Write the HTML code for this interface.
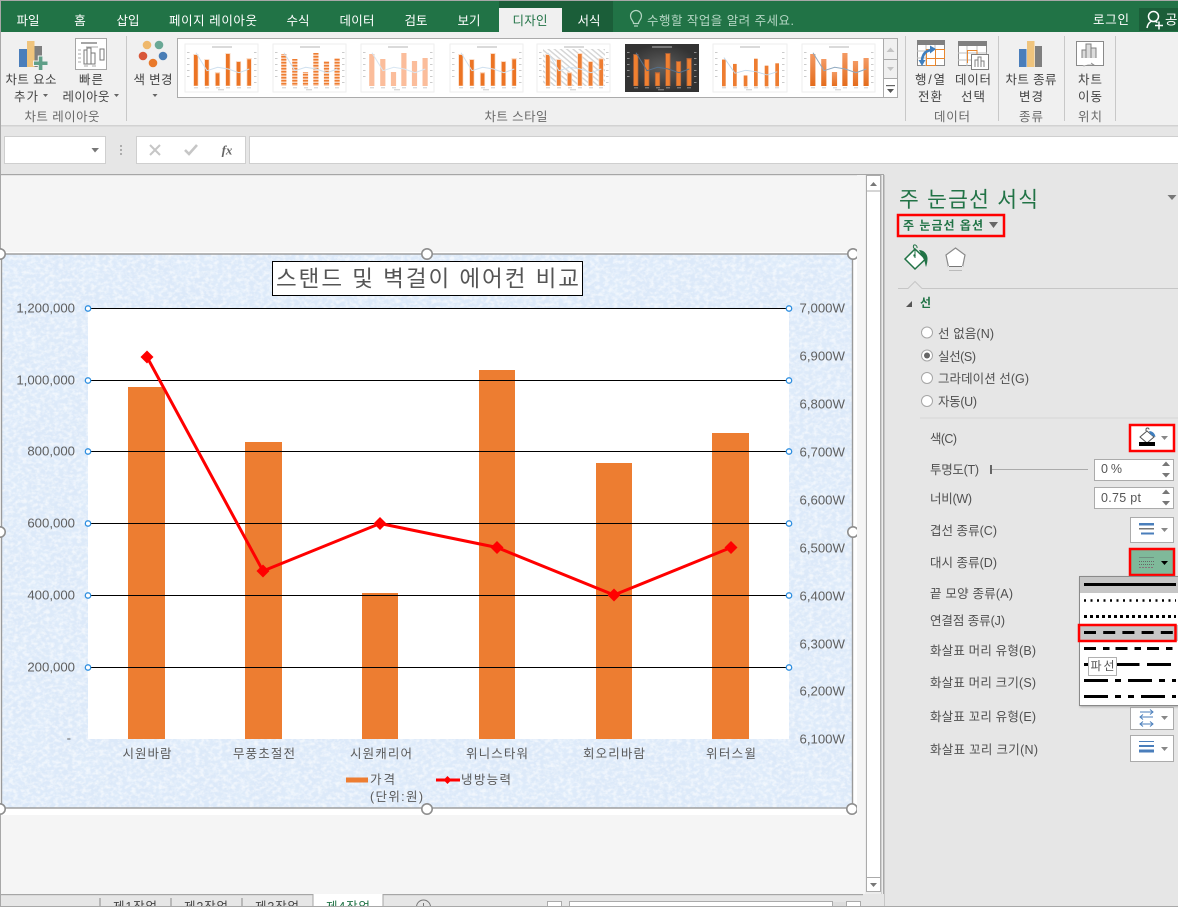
<!DOCTYPE html>
<html lang="ko"><head><meta charset="utf-8"><title>Excel</title>
<style>
html,body{margin:0;padding:0;width:1178px;height:907px;overflow:hidden;background:#e6e6e6}
svg{display:block}
text{font-family:"Liberation Sans","Noto Sans CJK KR",sans-serif;dominant-baseline:central;fill:#444;font-size:12.5px;transform:translateY(2px)}
.c{text-anchor:middle}
.e{text-anchor:end}
.tab{fill:#fff;font-size:12.5px;text-anchor:middle}
.r{fill:#505050;font-size:12.5px}
.lab{fill:#6a6a6a;font-size:12.5px;text-anchor:middle}
.ax{fill:#5f5f5f;font-size:13.2px;transform:translateY(1px)}
.cat{fill:#5a5a5a;font-size:12.5px;text-anchor:middle}
</style></head><body>
<svg xmlns="http://www.w3.org/2000/svg" width="1178" height="907" viewBox="0 0 1178 907">
<defs>
<filter id="tex" x="0" y="0" width="100%" height="100%">
<feTurbulence type="fractalNoise" baseFrequency="0.04" numOctaves="3" seed="4"/>
<feColorMatrix type="matrix" values="0 0 0 0 0.74  0 0 0 0 0.84  0 0 0 0 0.96  2 0 0 0 -0.75"/>
</filter>
<filter id="tex2" x="0" y="0" width="100%" height="100%">
<feTurbulence type="fractalNoise" baseFrequency="0.22 0.28" numOctaves="3" seed="11"/>
<feColorMatrix type="matrix" values="0 0 0 0 1  0 0 0 0 1  0 0 0 0 1  0 2.6 0 0 -1.02"/>
</filter>
<pattern id="stripe" width="3" height="3" patternUnits="userSpaceOnUse"><rect width="3" height="3" fill="#fbd3b9"/><rect width="3" height="1.5" fill="#ee7d31"/></pattern>
<pattern id="hatch" width="4" height="4" patternUnits="userSpaceOnUse" patternTransform="rotate(40)"><rect width="4" height="4" fill="#fff"/><rect width="4" height="1.4" fill="#d4d4d4"/></pattern>
<linearGradient id="gr" x1="0" y1="0" x2="0" y2="1"><stop offset="0" stop-color="#f49a63"/><stop offset="1" stop-color="#e46c1c"/></linearGradient>
<radialGradient id="dk"><stop offset="0" stop-color="#5f5f5f"/><stop offset="1" stop-color="#333"/></radialGradient>
<g id="b"><rect x="9" y="11" width="3.7" height="30.7"/><rect x="20" y="16" width="3.7" height="25.7"/><rect x="30.7" y="29.3" width="3.7" height="12.4"/><rect x="41" y="10" width="3.7" height="31.7"/><rect x="51.7" y="18" width="3.7" height="23.7"/><rect x="62.3" y="15.3" width="3.7" height="26.4"/></g>
<g id="h"><rect x="8.2" y="10" width="5.2" height="32" /><rect x="19.2" y="15" width="5.2" height="27"/><rect x="29.9" y="28" width="5.2" height="14"/><rect x="40.3" y="9" width="5.2" height="33"/><rect x="50.9" y="17" width="5.2" height="25"/><rect x="61.5" y="14" width="5.2" height="28"/></g>
<polyline id="l" fill="none" stroke-width="1" points="11,8.7 22,26.7 32.7,23.3 43.3,25 54,28.7 64.3,25"/>
<g id="tk" fill="#b5b5b5"><rect x="27" y="2.5" width="20" height="1"/><rect x="2" y="8" width="2.5" height=".7"/><rect x="2" y="14" width="2.5" height=".7"/><rect x="2" y="20" width="2.5" height=".7"/><rect x="2" y="26" width="2.5" height=".7"/><rect x="2" y="32" width="2.5" height=".7"/><rect x="69" y="8" width="2.5" height=".7"/><rect x="69" y="14" width="2.5" height=".7"/><rect x="69" y="20" width="2.5" height=".7"/><rect x="69" y="26" width="2.5" height=".7"/><rect x="69" y="32" width="2.5" height=".7"/><rect x="69" y="38" width="2.5" height=".7"/><rect x="9" y="43.5" width="4" height=".7"/><rect x="20" y="43.5" width="4" height=".7"/><rect x="31" y="43.5" width="4" height=".7"/><rect x="41" y="43.5" width="4" height=".7"/><rect x="52" y="43.5" width="4" height=".7"/><rect x="62" y="43.5" width="4" height=".7"/><rect x="33" y="45.5" width="6" height=".7"/></g>
<g id="handle"><circle r="5.2" fill="#fff" stroke="#8e8e8e" stroke-width="1.6"/></g>
</defs>

<!-- base -->
<rect width="1178" height="907" fill="#e6e6e6"/>
<rect y="0" width="1178" height="32" fill="#217346"/>
<rect y="0" width="1178" height="1" fill="#a8a8a8"/>
<rect x="499" y="1" width="114" height="31" fill="#1b5e39"/>
<rect x="499" y="8" width="63" height="24" fill="#f0f0f0"/>
<rect x="1139" y="8" width="39" height="23" fill="#1b5e39"/>
<rect x="0" y="32" width="1178" height="93" fill="#f0f0f0"/>
<rect x="0" y="125" width="1178" height="1.5" fill="#d2d2d2"/>
<rect x="0" y="0" width="1" height="907" fill="#a8a8a8"/>

<!-- tabs -->
<text class="tab" x="28" y="19">파일</text>
<text class="tab" x="80" y="19">홈</text>
<text class="tab" x="128" y="19">삽입</text>
<text class="tab" x="213" y="19" textLength="88">페이지 레이아웃</text>
<text class="tab" x="298" y="19">수식</text>
<text class="tab" x="357" y="19" textLength="35">데이터</text>
<text class="tab" x="416" y="19">검토</text>
<text class="tab" x="469" y="19">보기</text>
<text class="tab" x="530" y="19" style="fill:#217346" textLength="35">디자인</text>
<text class="tab" x="589" y="19">서식</text>
<g fill="none" stroke="#b5d6c4" stroke-width="1.2"><path d="M633.500 23.500c0-3-3-3.500-3-7.500a5.500 5.500 0 0 1 11 0c0 4-3 4.500-3 7.500z"/><path d="M634 26h4"/></g>
<text x="647" y="19" style="fill:#b5d6c4" textLength="147">수행할 작업을 알려 주세요.</text>
<text class="tab" x="1111" y="18" textLength="36">로그인</text>
<g fill="none" stroke="#fff" stroke-width="1.5"><circle cx="1153.500" cy="16.500" r="5"/><path d="M1147 28c1-5 3-6 5-7M1155.500 21.500l2 1"/><path d="M1155 25.500h8M1159 21.500v8"/></g>
<text class="tab" x="1165" y="18" style="text-anchor:start;font-size:13.500px">공유</text>

<!-- ribbon separators -->
<g fill="#c8c8c8"><rect x="126" y="36" width="1" height="85"/><rect x="905" y="36" width="1" height="85"/><rect x="998" y="36" width="1" height="85"/><rect x="1064" y="36" width="1" height="85"/><rect x="1115" y="36" width="1" height="85"/></g>

<!-- chart elements icon -->
<rect x="19" y="49" width="8" height="18" fill="#4a7ebb"/><rect x="27" y="41" width="7.500" height="26" fill="#efc47d"/><rect x="34.500" y="46" width="7.500" height="21" fill="#7f7f7f"/>
<path d="M38.300 56h4.600v5h5.100v4.500h-5.100v5h-4.600v-5h-4.800v-4.500h4.800z" fill="#5f9f88" stroke="#f0f0f0" stroke-width="1"/>
<text class="c" x="31" y="78" textLength="51">차트 요소</text>
<text class="c" x="26" y="95" textLength="24">추가</text><polygon points="43,94 48,94 45.500,97" fill="#666"/>
<!-- quick layout -->
<rect x="75.500" y="38.500" width="31" height="31" fill="#fff" stroke="#a6a6a6"/>
<rect x="81" y="42" width="16" height="2" fill="#a6a6a6"/><rect x="84" y="50" width="3" height="14" fill="none" stroke="#777"/><rect x="87" y="48" width="4" height="16" fill="none" stroke="#777"/><rect x="91" y="53" width="4" height="11" fill="none" stroke="#777"/>
<rect x="100" y="49" width="4" height="11" fill="none" stroke="#777"/>
<path d="M78 50h3M78 54h3M78 58h3M78 62h3M84 66h4M92 66h4M86 47h12" stroke="#aaa" stroke-width="1"/>
<text class="c" x="91" y="78" textLength="24">빠른</text>
<text class="c" x="86" y="95" textLength="47">레이아웃</text><polygon points="114,94 119,94 116.500,97" fill="#666"/>
<!-- color -->
<circle cx="147" cy="45" r="4.300" fill="#efb86b"/><circle cx="159" cy="45" r="4.300" fill="#69a895"/><circle cx="143" cy="56" r="4.300" fill="#d8573a"/><circle cx="163" cy="56" r="4.300" fill="#4a7eb6"/><circle cx="153" cy="63" r="4.300" fill="#e9792a"/>
<text class="c" x="153" y="78" textLength="39">색 변경</text><polygon points="152.500,94 157.500,94 155,97" fill="#666"/>
<text class="lab" x="62" y="115" textLength="75">차트 레이아웃</text>
<text class="lab" x="516" y="115" textLength="63">차트 스타일</text>

<!-- gallery -->
<rect x="177.500" y="38.500" width="706" height="59" fill="#fff" stroke="#ababab"/>
<g fill="#f0f0f0" stroke="#ababab"><rect x="883.500" y="38.500" width="14" height="21"/><rect x="883.500" y="59.500" width="14" height="19"/></g><rect x="883.500" y="78.500" width="14" height="19" fill="#fff" stroke="#ababab"/>
<polygon points="886.500,52 894.500,52 890.500,47.500" fill="#c4c4c4"/><polygon points="887,67 894,67 890.500,71" fill="#c4c4c4"/><rect x="886" y="85" width="9" height="1.200" fill="#666"/><polygon points="887,89 894,89 890.500,93" fill="#555"/>

<g transform="translate(185,44)"><rect width="73" height="48" fill="#fff" stroke="#eee"/><use href="#tk"/><use href="#h" fill="#fbdcc7"/><use href="#b" fill="#ec7424"/><use href="#l" stroke="#cfe0ef"/></g>
<g transform="translate(273,44)"><rect width="73" height="48" fill="#fff" stroke="#eee"/><use href="#tk"/><use href="#h" fill="url(#stripe)"/><use href="#l" stroke="#cfe0ef"/></g>
<g transform="translate(361,44)"><rect width="73" height="48" fill="#fff" stroke="#eee"/><use href="#tk"/><use href="#h" fill="#fbbd9b"/><use href="#l" stroke="#d8e6f2"/></g>
<g transform="translate(450,44)"><rect width="73" height="48" fill="#fff" stroke="#eee"/><use href="#tk"/><use href="#h" fill="#fbdcc7"/><use href="#b" fill="#ec7424"/><use href="#l" stroke="#cfe0ef"/></g>
<g transform="translate(537,44)"><rect width="73" height="48" fill="#fff" stroke="#eee"/><rect x="6" y="5" width="62" height="37" fill="url(#hatch)"/><use href="#tk"/><use href="#h" fill="#fbdcc7"/><use href="#b" fill="#ee7d31"/><use href="#l" stroke="#cfe0ef"/></g>
<g transform="translate(625,44)"><rect width="74" height="48" fill="url(#dk)"/><use href="#tk"/><use href="#h" fill="#a9603a"/><use href="#b" fill="#f08030"/><use href="#l" stroke="#54708c"/></g>
<g transform="translate(713,44)"><rect width="74" height="48" fill="#fff" stroke="#eee"/><use href="#tk"/><g transform="translate(0,6) scale(1,.87)"><use href="#b" fill="#ee7d31"/><use href="#l" stroke="#c0d6e8"/></g></g>
<g transform="translate(802,44)"><rect width="73" height="48" fill="#fff" stroke="#eee"/><use href="#tk"/><use href="#h" fill="url(#gr)"/><use href="#l" stroke="#8fa9c0"/></g>

<!-- switch row/col -->
<rect x="917.500" y="40.500" width="27" height="25" fill="#fff" stroke="#8a8a8a"/><rect x="917" y="40" width="28" height="5" fill="#808080"/>
<path d="M917 51h28M917 58h28M926 45v21M935 45v21" stroke="#bdbdbd"/>
<rect x="926.500" y="49.500" width="9" height="9" fill="#fff" stroke="#e8872f"/><rect x="935.500" y="49.500" width="9" height="9" fill="#fff" stroke="#e8872f"/><rect x="926.500" y="58.500" width="9" height="7" fill="#fff" stroke="#e8872f"/>
<path d="M922 62c0-7 3-11 9-12" fill="none" stroke="#3f7fbf" stroke-width="2.600"/><polygon points="930,45.500 936,49 930,53.500" fill="#3f7fbf"/><polygon points="918.500,60 925.500,60 922,66" fill="#3f7fbf"/>
<text class="c" x="930" y="78" textLength="30">행/열</text><text class="c" x="930" y="95" textLength="24">전환</text>
<!-- select data -->
<rect x="958.500" y="41.500" width="28" height="24" fill="#fff" stroke="#8a8a8a"/><rect x="958" y="41" width="29" height="5" fill="#808080"/>
<path d="M958 53h29M958 60h29M967 46v20M977 46v20" stroke="#bdbdbd"/>
<path d="M967.500 63V50.500h9.500V56" fill="none" stroke="#e8872f" stroke-width="1"/>
<rect x="971.500" y="54.500" width="17" height="15" fill="#fff" stroke="#808080"/><path d="M975 67v-7h3v7M978 67v-10h3v10M981 67v-6h3v6" fill="none" stroke="#808080"/>
<text class="c" x="973" y="78" textLength="36">데이터</text><text class="c" x="973" y="95" textLength="24">선택</text>
<!-- change type -->
<rect x="1019" y="49" width="7.500" height="18" fill="#4a7ebb"/><rect x="1027" y="41" width="7.500" height="26" fill="#efc47d"/><rect x="1035" y="46" width="7" height="21" fill="#7f7f7f"/>
<text class="c" x="1031" y="78" textLength="51">차트 종류</text><text class="c" x="1031" y="95" textLength="24">변경</text>
<!-- move -->
<path d="M1076.500 41.500h27v24h-15l-3 0 -3 0c-1 0-6 0-6 0z" fill="#fff" stroke="#8a8a8a"/><path d="M1082 65.500c1 0 2 .5 2 .5l4-1h6l-3-2" fill="#fff" stroke="#8a8a8a" stroke-width=".8"/>
<path d="M1082 58v-8h4v8M1086 58v-14h5v14M1091 58v-10h5v10" fill="#dcdcdc" stroke="#808080"/>
<text class="c" x="1090" y="78" textLength="24">차트</text><text class="c" x="1090" y="95" textLength="24">이동</text>
<text class="lab" x="952" y="115" textLength="36">데이터</text><text class="lab" x="1031" y="115" textLength="24">종류</text><text class="lab" x="1090" y="115" textLength="24">위치</text>

<!-- formula bar -->
<rect x="4.500" y="136.500" width="101" height="27" fill="#fff" stroke="#cfcfcf"/><polygon points="91.500,148 99,148 95,152.500" fill="#777"/>
<g fill="#adadad"><rect x="120" y="145" width="2" height="2"/><rect x="120" y="149" width="2" height="2"/><rect x="120" y="153" width="2" height="2"/></g>
<rect x="136.500" y="136.500" width="109" height="27" fill="#fff" stroke="#cfcfcf"/>
<path d="M150 145l10 10M160 145l-10 10" stroke="#c6c6c6" stroke-width="2" fill="none"/>
<path d="M185 150l4 4 8-9" stroke="#c6c6c6" stroke-width="2.600" fill="none"/>
<text x="227" y="148" class="c" style="font-family:'Liberation Serif',serif;font-style:italic;font-weight:bold;font-size:13px;fill:#666">fx</text>
<rect x="249.500" y="136.500" width="930" height="27" fill="#fff" stroke="#cfcfcf"/>

<!-- sheet area -->
<rect x="1" y="175" width="883" height="719" fill="#f5f5f5"/>
<rect x="0" y="174" width="884" height="1.200" fill="#a6a6a6"/>
<rect x="0" y="252" width="857" height="563" fill="#fff"/>

<!-- chart -->
<rect x="2" y="254" width="851" height="554" fill="#dce9f9"/>
<rect x="2" y="254" width="851" height="554" filter="url(#tex)"/>
<rect x="2" y="254" width="851" height="554" filter="url(#tex2)" opacity=".6"/>
<rect x="88" y="308" width="701" height="431" fill="#fff"/>
<rect x="1.500" y="254" width="851" height="554" fill="none" stroke="#9a9a9a" stroke-width="1.400"/>

<g fill="#ed7d31"><rect x="128" y="387" width="37" height="352"/><rect x="245" y="442" width="37" height="297"/><rect x="362" y="593" width="36" height="146"/><rect x="479" y="370" width="36" height="369"/><rect x="596" y="463" width="36" height="276"/><rect x="712" y="433" width="37" height="306"/></g>
<g stroke="#000" stroke-width="1"><path d="M88 308.500H789M88 380.500H789M88 451.500H789M88 523.500H789M88 595.500H789M88 667.500H789"/></g>
<polyline points="147,357 263,571 380,523.500 497,547.500 614,595 731,547.500" fill="none" stroke="#f00" stroke-width="3"/>
<g fill="#f00"><polygon points="147,350.500 153.500,357 147,363.500 140.500,357"/><polygon points="263,564.500 269.500,571 263,577.500 256.500,571"/><polygon points="380,517 386.500,523.500 380,530 373.500,523.500"/><polygon points="497,541 503.500,547.500 497,554 490.500,547.500"/><polygon points="614,588.500 620.500,595 614,601.500 607.500,595"/><polygon points="731,541 737.500,547.500 731,554 724.500,547.500"/></g>
<g fill="#fff" stroke="#2f8fe0" stroke-width="1.300"><circle cx="88" cy="308.500" r="2.700"/><circle cx="88" cy="380.500" r="2.700"/><circle cx="88" cy="451.500" r="2.700"/><circle cx="88" cy="523.500" r="2.700"/><circle cx="88" cy="595.500" r="2.700"/><circle cx="88" cy="667.500" r="2.700"/><circle cx="789" cy="308.500" r="2.700"/><circle cx="789" cy="380.500" r="2.700"/><circle cx="789" cy="451.500" r="2.700"/><circle cx="789" cy="523.500" r="2.700"/><circle cx="789" cy="595.500" r="2.700"/><circle cx="789" cy="667.500" r="2.700"/></g>

<rect x="272.500" y="261.500" width="310" height="34" fill="#fff" stroke="#000"/>
<text class="c" x="427.500" y="277" style="font-size:22.500px;fill:#555" textLength="303">스탠드 및 벽걸이 에어컨 비교</text>

<text class="ax e" x="75" y="307">1,200,000</text><text class="ax e" x="75" y="379">1,000,000</text><text class="ax e" x="75" y="450">800,000</text><text class="ax e" x="75" y="522">600,000</text><text class="ax e" x="75" y="594">400,000</text><text class="ax e" x="75" y="666">200,000</text><text class="ax e" x="71" y="737">-</text>
<text class="ax" x="799.500" y="307">7,000W</text><text class="ax" x="799.500" y="355">6,900W</text><text class="ax" x="799.500" y="403">6,800W</text><text class="ax" x="799.500" y="451">6,700W</text><text class="ax" x="799.500" y="499">6,600W</text><text class="ax" x="799.500" y="547">6,500W</text><text class="ax" x="799.500" y="595">6,400W</text><text class="ax" x="799.500" y="643">6,300W</text><text class="ax" x="799.500" y="690">6,200W</text><text class="ax" x="799.500" y="738">6,100W</text>
<text class="cat" x="147" y="752" textLength="49">시원바람</text><text class="cat" x="264" y="752" textLength="62">무풍초절전</text><text class="cat" x="381" y="752" textLength="62">시원캐리어</text><text class="cat" x="497" y="752" textLength="62">위니스타워</text><text class="cat" x="614" y="752" textLength="62">회오리바람</text><text class="cat" x="731" y="752" textLength="50">위터스윌</text>
<rect x="346" y="777.500" width="22" height="5" fill="#ed7d31"/>
<text class="cat" x="370" y="778" style="text-anchor:start" textLength="25">가격</text><text class="cat" x="370" y="795" style="text-anchor:start" textLength="53">(단위:원)</text>
<rect x="436" y="778.500" width="24" height="3" fill="#f00"/><polygon points="447.500,776 451.500,780 447.500,784 443.500,780" fill="#f00"/>
<text class="cat" x="461" y="778" style="text-anchor:start" textLength="50">냉방능력</text>

<use href="#handle" x="0" y="254"/><use href="#handle" x="427" y="254"/><use href="#handle" x="853" y="254"/><use href="#handle" x="0" y="532"/><use href="#handle" x="853" y="532"/><use href="#handle" x="0" y="809"/><use href="#handle" x="427" y="809"/><use href="#handle" x="852" y="809"/>

<!-- vertical scrollbar -->
<rect x="857" y="175" width="27" height="719" fill="#f5f5f5"/>
<rect x="865" y="175" width="19" height="719" fill="#ededed"/>
<rect x="866.500" y="175.500" width="14" height="716" fill="#fff" stroke="#ababab"/>
<rect x="866.500" y="877.500" width="14" height="14" fill="#fff" stroke="#ababab"/><polygon points="870,883 877,883 873.500,887" fill="#777"/>
<polygon points="870,186 877,186 873.500,182" fill="#777"/><rect x="866.500" y="190.500" width="14" height="1" fill="#ababab"/>
<rect x="881" y="175" width="1" height="732" fill="#d0d0d0"/><rect x="883" y="175" width="1.500" height="732" fill="#a8a8a8"/>

<!-- sheet tabs -->
<rect x="1" y="894" width="883" height="13" fill="#e6e6e6"/>
<rect x="1" y="894" width="862" height="1.200" fill="#a6a6a6"/>
<rect x="313" y="894" width="70" height="13" fill="#fff"/>
<g fill="#8a8a8a"><rect x="99.500" y="898" width="1" height="9"/><rect x="170.500" y="898" width="1" height="9"/><rect x="241.500" y="898" width="1" height="9"/></g>
<rect x="312.500" y="894" width="1" height="13" fill="#a6a6a6"/><rect x="382.500" y="894" width="1" height="13" fill="#a6a6a6"/>
<text class="c" x="135" y="905" textLength="44" style="fill:#444">제1작업</text><text class="c" x="206" y="905" textLength="44" style="fill:#444">제2작업</text><text class="c" x="277" y="905" textLength="44" style="fill:#444">제3작업</text><text class="c" x="348" y="905" textLength="44" style="fill:#217346">제4작업</text>
<circle cx="423.500" cy="907" r="7" fill="none" stroke="#777"/><path d="M423.500 903v4" stroke="#777"/>
<rect x="547.500" y="901.500" width="14" height="8" fill="#fff" stroke="#ababab"/>
<rect x="569.500" y="901.500" width="263" height="8" fill="#fff" stroke="#ababab"/>
<rect x="833" y="902" width="13" height="5" fill="#ddd"/>
<rect x="846.500" y="901.500" width="14" height="8" fill="#fff" stroke="#ababab"/>
<rect x="0" y="906" width="1178" height="1" fill="#a8a8a8"/>

<!-- pane -->
<text x="899" y="198" style="font-size:21.500px;fill:#217346" textLength="139">주 눈금선 서식</text>
<polygon points="1167.500,195 1176.500,195 1172,200" fill="#777"/>
<rect x="898" y="215" width="106" height="21" fill="none" stroke="#f00" stroke-width="2.500"/>
<text x="903" y="223.500" style="font-size:12px;font-weight:bold;fill:#217346" textLength="80">주 눈금선 옵션</text>
<polygon points="989,222 998,222 993.500,228" fill="#666"/>
<!-- paint icon -->
<path d="M905 259l10-10 10.500 10-10.500 10z" fill="#fff" stroke="#217346" stroke-width="1.500"/>
<path d="M915 258v-9a2.500 2.500 0 0 1 -1-4 2.500 2.500 0 0 1 3 3" fill="none" stroke="#217346"/><circle cx="914.500" cy="255.500" r="1.200" fill="#217346"/>
<path d="M919 250c4 0 8 3 8.500 8 .2 3-1 8-1.500 9-1-3-1-6-3-9z" fill="#217346"/>
<!-- pentagon -->
<path d="M955.500 248l9.500 7-2.500 12h-14l-2.500-12z" fill="#fff" stroke="#8a8a8a" stroke-width="1.200"/><rect x="948" y="266" width="15" height="5" fill="#e6e6e6"/><path d="M949 266.500h13" stroke="#777" stroke-width="1"/><path d="M949 270.500h13" stroke="#bbb" stroke-width="1"/>
<path d="M898 288.500H908l7-7 7 7H1178" fill="none" stroke="#c6c6c6"/>
<polygon points="906,307 912,307 912,301" fill="#555"/>
<text x="920" y="301" style="font-weight:bold;font-size:12px;fill:#217346">선</text>
<g fill="#fff" stroke="#a6a6a6"><circle cx="927" cy="332.500" r="5.500"/><circle cx="927" cy="355.500" r="5.500"/><circle cx="927" cy="378" r="5.500"/><circle cx="927" cy="401" r="5.500"/></g><circle cx="927" cy="355.500" r="3" fill="#666"/>
<text class="r" x="938" y="332" textLength="56">선 없음(N)</text><text class="r" x="938" y="355" textLength="38">실선(S)</text><text class="r" x="938" y="377" textLength="91">그라데이션 선(G)</text><text class="r" x="938" y="400" textLength="39">자동(U)</text>
<rect x="920" y="417.500" width="258" height="1" fill="#d6d6d6"/>

<text class="r" x="930" y="437" textLength="27">색(C)</text>
<text class="r" x="930" y="468" textLength="49">투명도(T)</text>
<text class="r" x="930" y="497" textLength="42">너비(W)</text>
<text class="r" x="930" y="529" textLength="67">겹선 종류(C)</text>
<text class="r" x="930" y="561" textLength="67">대시 종류(D)</text>
<text class="r" x="930" y="592" textLength="83">끝 모양 종류(A)</text>
<text class="r" x="930" y="619" textLength="75">연결점 종류(J)</text>
<text class="r" x="930" y="649" textLength="106">화살표 머리 유형(B)</text>
<text class="r" x="930" y="681" textLength="106">화살표 머리 크기(S)</text>
<text class="r" x="930" y="715" textLength="106">화살표 꼬리 유형(E)</text>
<text class="r" x="930" y="748" textLength="108">화살표 꼬리 크기(N)</text>

<!-- color btn -->
<rect x="1130" y="425" width="44" height="26" fill="#fff" stroke="#f00" stroke-width="2.500"/>
<path d="M1140 437l7-6 7 6-7 6z" fill="#fff" stroke="#555"/><path d="M1146 431v-1.500a1.500 1.500 0 0 1 3 0" fill="none" stroke="#555"/><path d="M1149 431c3 0 6 2 6.500 6l-4.500-2z" fill="#3f7fbf"/>
<rect x="1139" y="442" width="16" height="4" fill="#000"/><polygon points="1161,436 1168,436 1164.500,440" fill="#888"/>
<!-- slider -->
<rect x="992" y="469" width="96" height="1" fill="#ababab"/><rect x="990" y="465" width="2" height="9" fill="#666"/>
<rect x="1094.500" y="459.500" width="79" height="21" fill="#fff" stroke="#ababab"/><text class="r" x="1101" y="467" style="fill:#555" textLength="21">0 %</text>
<polygon points="1162,466 1170,466 1166,461.500" fill="#777"/><polygon points="1162,473 1170,473 1166,477.500" fill="#777"/>
<rect x="1094.500" y="487.500" width="79" height="21" fill="#fff" stroke="#ababab"/><text class="r" x="1101" y="496" style="fill:#555" textLength="40">0.75 pt</text>
<polygon points="1162,494 1170,494 1166,489.500" fill="#777"/><polygon points="1162,501 1170,501 1166,505.500" fill="#777"/>
<!-- compound btn -->
<rect x="1130.500" y="517.500" width="43" height="25" fill="#fff" stroke="#ababab"/>
<rect x="1139" y="523" width="15" height="2.500" fill="#4a7ebb"/><rect x="1139" y="528" width="15" height="1.500" fill="#777"/><rect x="1141" y="532.500" width="13" height="2" fill="#4a7ebb"/>
<polygon points="1161,528 1168,528 1164.500,532" fill="#888"/>
<!-- dash btn -->
<rect x="1130" y="549" width="44" height="26" fill="#7fb99a" stroke="#f00" stroke-width="2.500"/>
<path d="M1139 557.500h15" stroke="#6f8f80"/><path d="M1139 561.500h15" stroke="#666" stroke-dasharray="1 1"/><path d="M1139 564.500h15" stroke="#666" stroke-dasharray="1 1"/><path d="M1139 567.500h15" stroke="#8a6f7a" stroke-dasharray="2 1"/>
<polygon points="1161,561 1168,561 1164.500,565" fill="#000"/>
<!-- arrow btns -->
<rect x="1130.500" y="707.500" width="43" height="22" fill="#fff" stroke="#ababab"/>
<path d="M1140 712h13M1140 717h13M1140 724h13" stroke="#4a7ebb" fill="none"/><path d="M1150 709.500l3 2.500-3 2.500M1143 714.500l-3 2.500 3 2.500M1143 721.500l-3 2.500 3 2.500M1150 721.500l3 2.500-3 2.500" stroke="#4a7ebb" fill="none"/>
<polygon points="1161,716 1168,716 1164.500,720" fill="#888"/>
<rect x="1130.500" y="735.500" width="43" height="26" fill="#fff" stroke="#ababab"/>
<rect x="1139" y="741" width="15" height="1" fill="#4a7ebb"/><rect x="1139" y="745" width="15" height="2" fill="#4a7ebb"/><rect x="1139" y="749.500" width="15" height="3" fill="#4a7ebb"/>
<polygon points="1161,747 1168,747 1164.500,751" fill="#888"/>

<!-- dropdown -->
<rect x="1079.500" y="576.500" width="100" height="129" fill="#fff" stroke="#8a8a8a" style="filter:drop-shadow(1px 1px 1px #aaa)"/>
<rect x="1080" y="577" width="98" height="16" fill="#c6c6c6"/>
<rect x="1080" y="625" width="98" height="16" fill="#c6c6c6"/>
<g stroke="#000" fill="none">
<path d="M1084 584.500H1176" stroke-width="3"/>
<path d="M1084 600.500H1176" stroke-width="2.500" stroke-dasharray="2 4.500"/>
<path d="M1084 616.500H1176" stroke-width="3" stroke-dasharray="3 3"/>
<path d="M1084 632.500H1176" stroke-width="3" stroke-dasharray="12 7.200"/>
<path d="M1084 648.500H1176" stroke-width="3" stroke-dasharray="12 7 6.500 6"/>
<path d="M1084 664.500H1176" stroke-width="3" stroke-dasharray="24 7.500"/>
<path d="M1084 680.500H1176" stroke-width="3" stroke-dasharray="24 7 6 7"/>
<path d="M1084 696.500H1176" stroke-width="3" stroke-dasharray="24 7 6 7 6 7"/>
</g>
<rect x="1079" y="625" width="96.500" height="16" fill="none" stroke="#f00" stroke-width="2.500"/>
<rect x="1088.500" y="657.500" width="28" height="18" fill="#fff" stroke="#b0b0b0"/>
<text class="c" x="1102.500" y="664" style="font-size:12px;fill:#555" textLength="24">파선</text>
</svg>
</body></html>
